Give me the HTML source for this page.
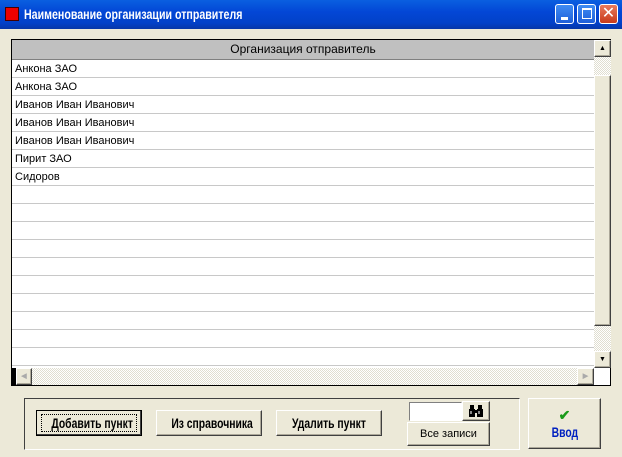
<!DOCTYPE html><html><head><meta charset="utf-8"><style>
*{margin:0;padding:0;box-sizing:border-box}
body{width:622px;height:457px;background:#ece9d8;position:relative;overflow:hidden;font-family:"Liberation Sans",sans-serif;font-size:11px}
.a{position:absolute}
.tb{left:0;top:0;width:622px;height:29px;background:linear-gradient(#0a5fe0,#0347d6 40%,#0241c8 80%,#0636a8);}
.tt{left:24px;top:6px;color:#fff;font-weight:bold;font-size:14px;transform:scaleX(0.76);transform-origin:0 0;white-space:nowrap}
.wb{top:4px;width:19px;height:20px;border:1px solid #fff;border-radius:3px;background:linear-gradient(#3f8cf3,#1f5fd9)}
.grid{left:11px;top:39px;width:600px;height:347px;border:1px solid #000;background:#fff}
.hdr{left:0;top:0;width:582px;height:20px;background:#c0c0c0;border-bottom:1px solid #808080;text-align:center;font-size:12px;line-height:19px;color:#000}
.row{left:0;width:582px;height:18px;border-bottom:1px solid #c8c8c8;padding-left:3px;line-height:18px;font-size:11px}
.btn{border:1px solid;border-color:#fff #404040 #404040 #fff;background:#ece9d8;box-shadow:inset -1px -1px 0 #aca899;text-align:center;font-weight:bold;font-size:14px;white-space:nowrap}
.n{display:inline-block;transform:scaleX(0.74)}
.chk{background:repeating-conic-gradient(#fff 0 25%,#e0ded0 0 50%) 0 0/2px 2px}
</style></head><body>
<div class="a tb"></div>
<div class="a" style="left:5px;top:7px;width:14px;height:14px;background:#e00;border:1px solid #400"></div>
<div class="a tt">Наименование организации отправителя</div>
<div class="a wb" style="left:555px"><div class="a" style="left:5px;top:12px;width:7px;height:3px;background:#fff"></div></div>
<div class="a wb" style="left:577px"><div class="a" style="left:4px;top:3px;width:10px;height:11px;border:1px solid #fff;border-top-width:2px"></div></div>
<div class="a wb" style="left:599px;background:linear-gradient(#e87a5c,#c83a1a);color:#fff;font-size:16px;line-height:17px;text-align:center">✕</div>
<div class="a grid">
<div class="a hdr">Организация отправитель</div>
<div class="a" style="left:0;top:20px">
<div class="row" style="position:relative">Анкона ЗАО</div>
<div class="row" style="position:relative">Анкона ЗАО</div>
<div class="row" style="position:relative">Иванов Иван Иванович</div>
<div class="row" style="position:relative">Иванов Иван Иванович</div>
<div class="row" style="position:relative">Иванов Иван Иванович</div>
<div class="row" style="position:relative">Пирит ЗАО</div>
<div class="row" style="position:relative">Сидоров</div>
<div class="row" style="position:relative"></div><div class="row" style="position:relative"></div><div class="row" style="position:relative"></div><div class="row" style="position:relative"></div><div class="row" style="position:relative"></div><div class="row" style="position:relative"></div><div class="row" style="position:relative"></div><div class="row" style="position:relative"></div><div class="row" style="position:relative"></div><div class="row" style="position:relative"></div>
</div>
<div class="a chk" style="left:582px;top:0;width:17px;height:328px"></div>
<div class="a btn" style="left:582px;top:0;width:17px;height:17px;font-size:7px;line-height:15px">▲</div>
<div class="a btn" style="left:582px;top:35px;width:17px;height:251px"></div>
<div class="a btn" style="left:582px;top:311px;width:17px;height:17px;font-size:7px;line-height:15px">▼</div>
<div class="a chk" style="left:0;top:328px;width:582px;height:17px"></div>
<div class="a" style="left:0;top:328px;width:4px;height:17px;background:#000"></div>
<div class="a btn" style="left:4px;top:328px;width:16px;height:17px;color:#aaa;font-size:7px;line-height:15px">◀</div>
<div class="a btn" style="left:565px;top:328px;width:17px;height:17px;color:#aaa;font-size:7px;line-height:15px">▶</div>
</div>
<div class="a" style="left:24px;top:398px;width:496px;height:52px;border:1px solid;border-color:#404040 #fff #fff #404040"></div>
<div class="a btn" style="left:36px;top:410px;width:106px;height:26px;line-height:24px;border-color:#000;box-shadow:inset -1px -1px 0 #404040"><span class="n">Добавить пункт</span></div>
<div class="a" style="left:41px;top:414px;width:96px;height:18px;border:1px dotted #000"></div>
<div class="a btn" style="left:156px;top:410px;width:106px;height:26px;line-height:24px"><span class="n">Из справочника</span></div>
<div class="a btn" style="left:276px;top:410px;width:106px;height:26px;line-height:24px"><span class="n">Удалить пункт</span></div>
<div class="a" style="left:409px;top:402px;width:53px;height:19px;background:#fff;border:1px solid;border-color:#808080 #fff #fff #808080"></div>
<div class="a btn" style="left:462px;top:401px;width:28px;height:20px">
<svg width="16" height="14" viewBox="0 0 16 14" style="margin-top:2px"><rect x="2" y="1" width="4" height="4" fill="#000"/><rect x="10" y="1" width="4" height="4" fill="#000"/><rect x="1" y="5" width="6" height="8" fill="#000"/><rect x="9" y="5" width="6" height="8" fill="#000"/><rect x="6" y="6" width="4" height="3" fill="#000"/><rect x="2" y="7" width="2" height="3" fill="#888"/><rect x="10" y="7" width="2" height="3" fill="#888"/></svg></div>
<div class="a btn" style="left:407px;top:422px;width:83px;height:24px;line-height:22px;font-weight:normal;font-size:11px">Все записи</div>
<div class="a btn" style="left:528px;top:398px;width:73px;height:51px;color:#0020c0;padding-top:8px;line-height:17px"><span style="color:#1a9a1a;font-size:14px">✔</span><br><span class="n">Ввод</span></div>
</body></html>
